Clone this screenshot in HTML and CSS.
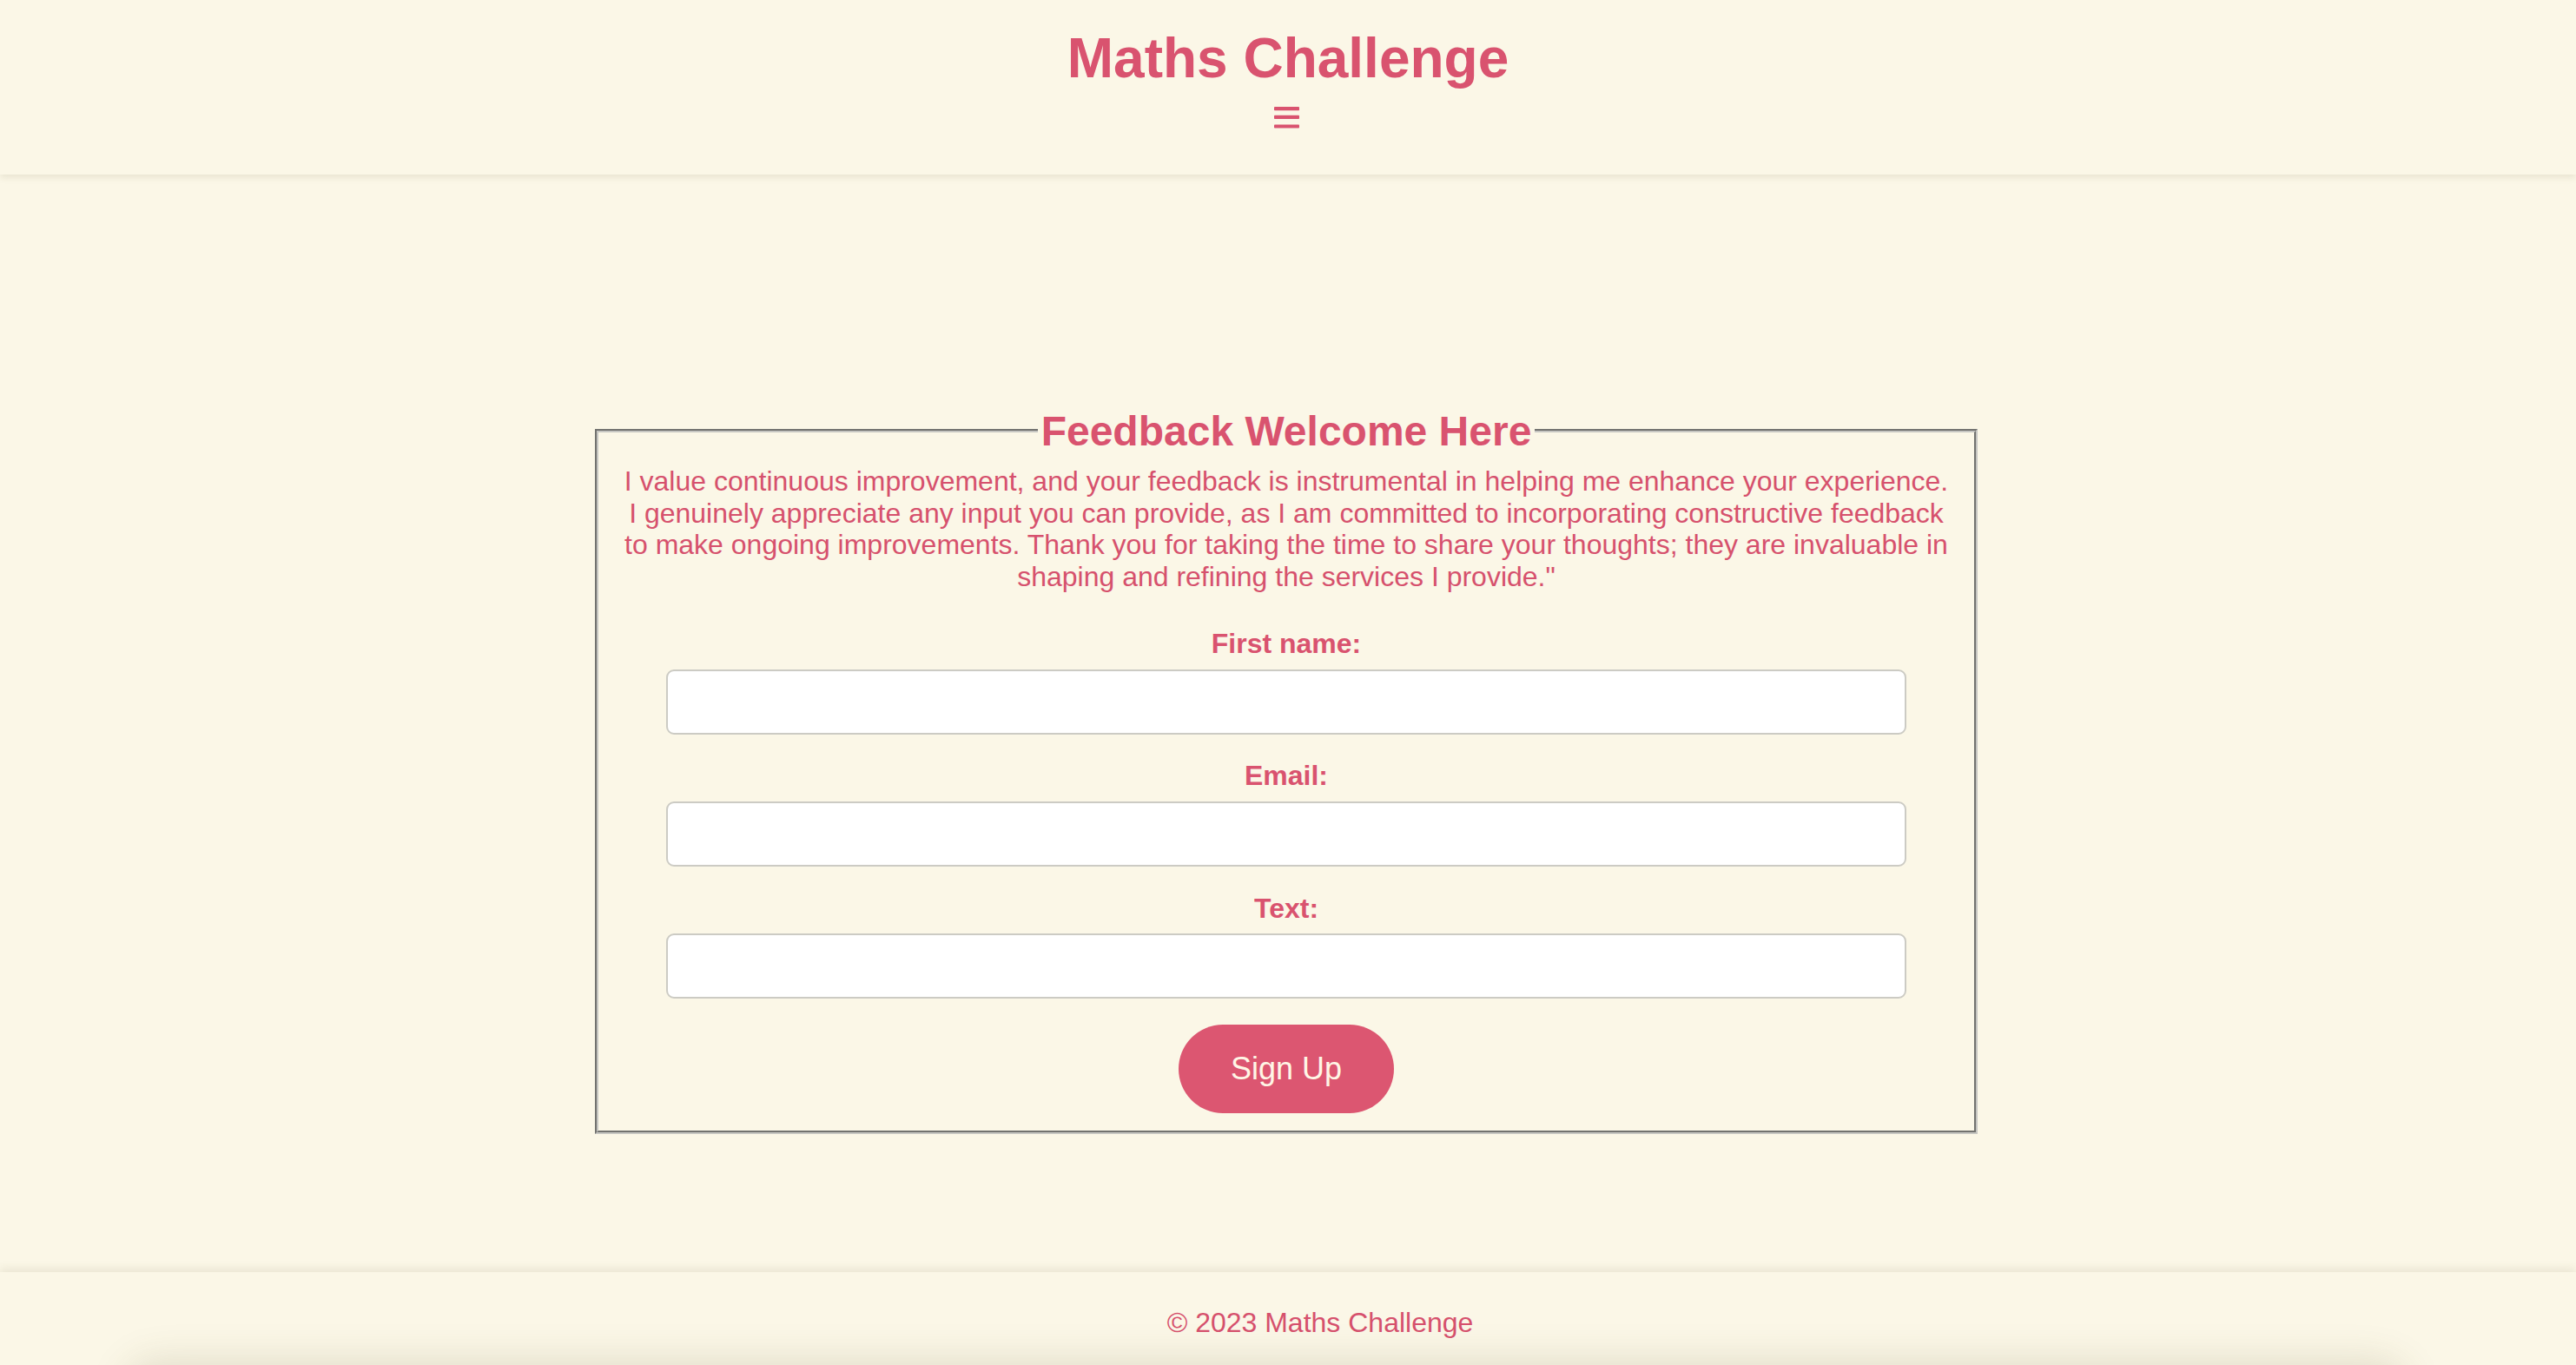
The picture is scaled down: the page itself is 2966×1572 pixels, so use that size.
FILE: index.html
```html
<!DOCTYPE html>
<html lang="en">
<head>
<meta charset="utf-8">
<title>Maths Challenge - Feedback</title>
<link rel="stylesheet" href="styles.css">
</head>
<body>
<header class="site-header">
  <h1 class="site-title">Maths Challenge</h1>
  <button class="menu-toggle" type="button" aria-label="Menu">
    <svg width="29" height="25" viewBox="0 0 29 25" aria-hidden="true">
      <rect x="0" y="0" width="29" height="4.2" rx="0.8" fill="#d9536f"/>
      <rect x="0" y="9.8" width="29" height="4.2" rx="0.8" fill="#d9536f"/>
      <rect x="0" y="20.4" width="29" height="4.2" rx="0.8" fill="#d9536f"/>
    </svg>
  </button>
</header>
<main class="content">
  <form class="feedback-form">
    <fieldset class="feedback-box">
      <legend class="feedback-title">Feedback Welcome Here</legend>
      <p class="intro">I value continuous improvement, and your feedback is instrumental in helping me enhance your experience. I genuinely appreciate any input you can provide, as I am committed to incorporating constructive feedback to make ongoing improvements. Thank you for taking the time to share your thoughts; they are invaluable in shaping and refining the services I provide."</p>
      <label class="field-label" for="fname">First name:</label>
      <input class="field-input" type="text" id="fname" name="fname">
      <label class="field-label" for="email">Email:</label>
      <input class="field-input" type="email" id="email" name="email">
      <label class="field-label" for="text">Text:</label>
      <input class="field-input" type="text" id="text" name="text">
      <button class="submit-btn" type="button">Sign Up</button>
    </fieldset>
  </form>
</main>
<footer class="site-footer">
  <p class="copyright">© 2023 Maths Challenge</p>
</footer>
</body>
</html>
```

FILE: styles.css
```css
html, body {
  margin: 0;
  padding: 0;
}

body {
  background: #fbf7e7;
  color: #d9536f;
  font-family: "Liberation Sans", Arial, Helvetica, sans-serif;
  min-height: 100vh;
  display: flex;
  flex-direction: column;
}

.site-header {
  background: #fbf7e7;
  padding: 31px 0 53px;
  display: flex;
  flex-direction: column;
  align-items: center;
  box-shadow: 0 3px 8px rgba(90, 80, 40, 0.12);
  position: relative;
  z-index: 1;
}

.site-title {
  margin: 0;
  font-size: 64px;
  line-height: 73.6px;
  font-weight: bold;
  color: #d9536f;
}

.menu-toggle {
  margin: 18px 0 0 -3px;
  padding: 0;
  border: 0;
  background: none;
  width: 29px;
  height: 25px;
  display: block;
}

.menu-toggle svg {
  display: block;
}

.content {
  flex: 1;
  padding-top: 268px;
}

.feedback-form {
  margin: 0;
  padding-right: 4px;
}

.feedback-box {
  width: 1536px;
  margin: 0 auto;
  padding: 12px 24px 20px;
  border: 4px groove #c6c6c2;
  display: flex;
  flex-direction: column;
  align-items: center;
  text-align: center;
  box-sizing: content-box;
}

.feedback-title {
  margin-left: auto;
  margin-right: auto;
  padding: 0 4px;
  font-size: 48px;
  line-height: 55.2px;
  font-weight: bold;
  color: #d9536f;
}

.intro {
  margin: 0 0 40px;
  font-size: 32px;
  line-height: 36.8px;
  color: #d6516d;
}

.field-label {
  display: block;
  font-size: 32px;
  line-height: 36.8px;
  font-weight: bold;
  margin-bottom: 11px;
  color: #d9536f;
}

.field-input {
  display: block;
  width: 1428px;
  height: 75px;
  box-sizing: border-box;
  margin: 0 0 29.5px;
  padding: 8px 16px;
  border: 2px solid #cccbc4;
  border-radius: 9px;
  background: #ffffff;
  font-family: inherit;
  font-size: 32px;
}

.submit-btn {
  margin-top: 0.5px;
  width: 248px;
  height: 102px;
  border: 0;
  border-radius: 51px;
  background: #dc5671;
  color: #fff6e6;
  font-family: inherit;
  font-size: 36px;
  padding: 0;
}

.site-footer {
  background: #fbf7e7;
  padding: 40px 0 30px 74px;
  text-align: center;
  box-shadow: 0 -4px 10px rgba(90, 80, 40, 0.1);
  position: relative;
  overflow: hidden;
}

.site-footer::after {
  content: "";
  position: absolute;
  left: 150px;
  right: 200px;
  bottom: -60px;
  height: 60px;
  border-radius: 40px;
  box-shadow: 0 0 44px 6px rgba(90, 80, 40, 0.15);
}

.copyright {
  margin: 0;
  font-size: 32px;
  line-height: 36.8px;
  color: #d6516d;
}
```
